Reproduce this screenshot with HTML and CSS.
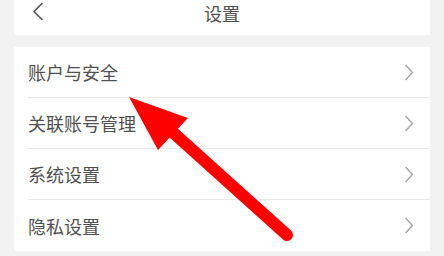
FILE: index.html
```html
<!DOCTYPE html>
<html lang="zh-CN">
<head>
    <meta charset="UTF-8">
    <meta name="viewport" content="width=device-width, initial-scale=1.0">
    <title>设置</title>
    <link rel="stylesheet" href="styles.css">
</head>
<body>
    <header class="topbar">
        <span class="back">
            <svg width="12" height="19" viewBox="0 0 12 19"><path d="M10.5 1 L2 9.5 L10.5 18" fill="none" stroke="#555" stroke-width="1.6"/></svg>
        </span>
        <h1 class="title">设置</h1>
    </header>
    <section class="list">
        <div class="row">
            <span class="label">账户与安全</span>
            <svg class="more" width="10" height="17" viewBox="0 0 10 17"><path d="M1.5 1 L8.5 8.5 L1.5 16" fill="none" stroke="#a5a5a5" stroke-width="1.4"/></svg>
        </div>
        <div class="row">
            <span class="label">关联账号管理</span>
            <svg class="more" width="10" height="17" viewBox="0 0 10 17"><path d="M1.5 1 L8.5 8.5 L1.5 16" fill="none" stroke="#a5a5a5" stroke-width="1.4"/></svg>
        </div>
        <div class="row">
            <span class="label">系统设置</span>
            <svg class="more" width="10" height="17" viewBox="0 0 10 17"><path d="M1.5 1 L8.5 8.5 L1.5 16" fill="none" stroke="#a5a5a5" stroke-width="1.4"/></svg>
        </div>
        <div class="row">
            <span class="label">隐私设置</span>
            <svg class="more" width="10" height="17" viewBox="0 0 10 17"><path d="M1.5 1 L8.5 8.5 L1.5 16" fill="none" stroke="#a5a5a5" stroke-width="1.4"/></svg>
        </div>
    </section>
    <!-- red arrow drawn over the screenshot -->
    <svg class="arrow" width="444" height="256" viewBox="0 0 444 256">
        <line x1="168" y1="128" x2="287" y2="235" stroke="#ff0000" stroke-width="12" stroke-linecap="round"/>
        <polygon points="129,97 188,118 158,150" fill="#ff0000"/>
    </svg>
</body>
</html>
```
FILE: styles.css
```css
html, body {
    margin: 0;
    padding: 0;
}
body {
    background-color: #f2f2f2;
    padding: 0 14px;
    height: 256px;
    overflow: hidden;
    font-family: "Noto Sans CJK SC", "Noto Sans", sans-serif;
    color: #555;
}
.topbar {
    background-color: #fff;
    height: 35px;
    display: flex;
    align-items: flex-start;
    justify-content: center;
    position: relative;
}
.back {
    position: absolute;
    left: 18px;
    top: 2px;
}
.title {
    margin: 0;
    font-size: 18px;
    font-weight: normal;
    line-height: 27px;
    color: #505050;
}
.list {
    margin-top: 12px;
    background-color: #fff;
}
.row {
    height: 50px;
    margin-left: 14px;
    padding-right: 16px;
    display: flex;
    align-items: center;
    justify-content: space-between;
    border-bottom: 1px solid #e9e9e9;
}
.row:last-child {
    border-bottom: none;
    height: 51px;
}
.label {
    font-size: 18px;
    color: #505050;
}
.more {
    display: block;
}
.arrow {
    position: absolute;
    left: 0;
    top: 0;
    pointer-events: none;
}
```
